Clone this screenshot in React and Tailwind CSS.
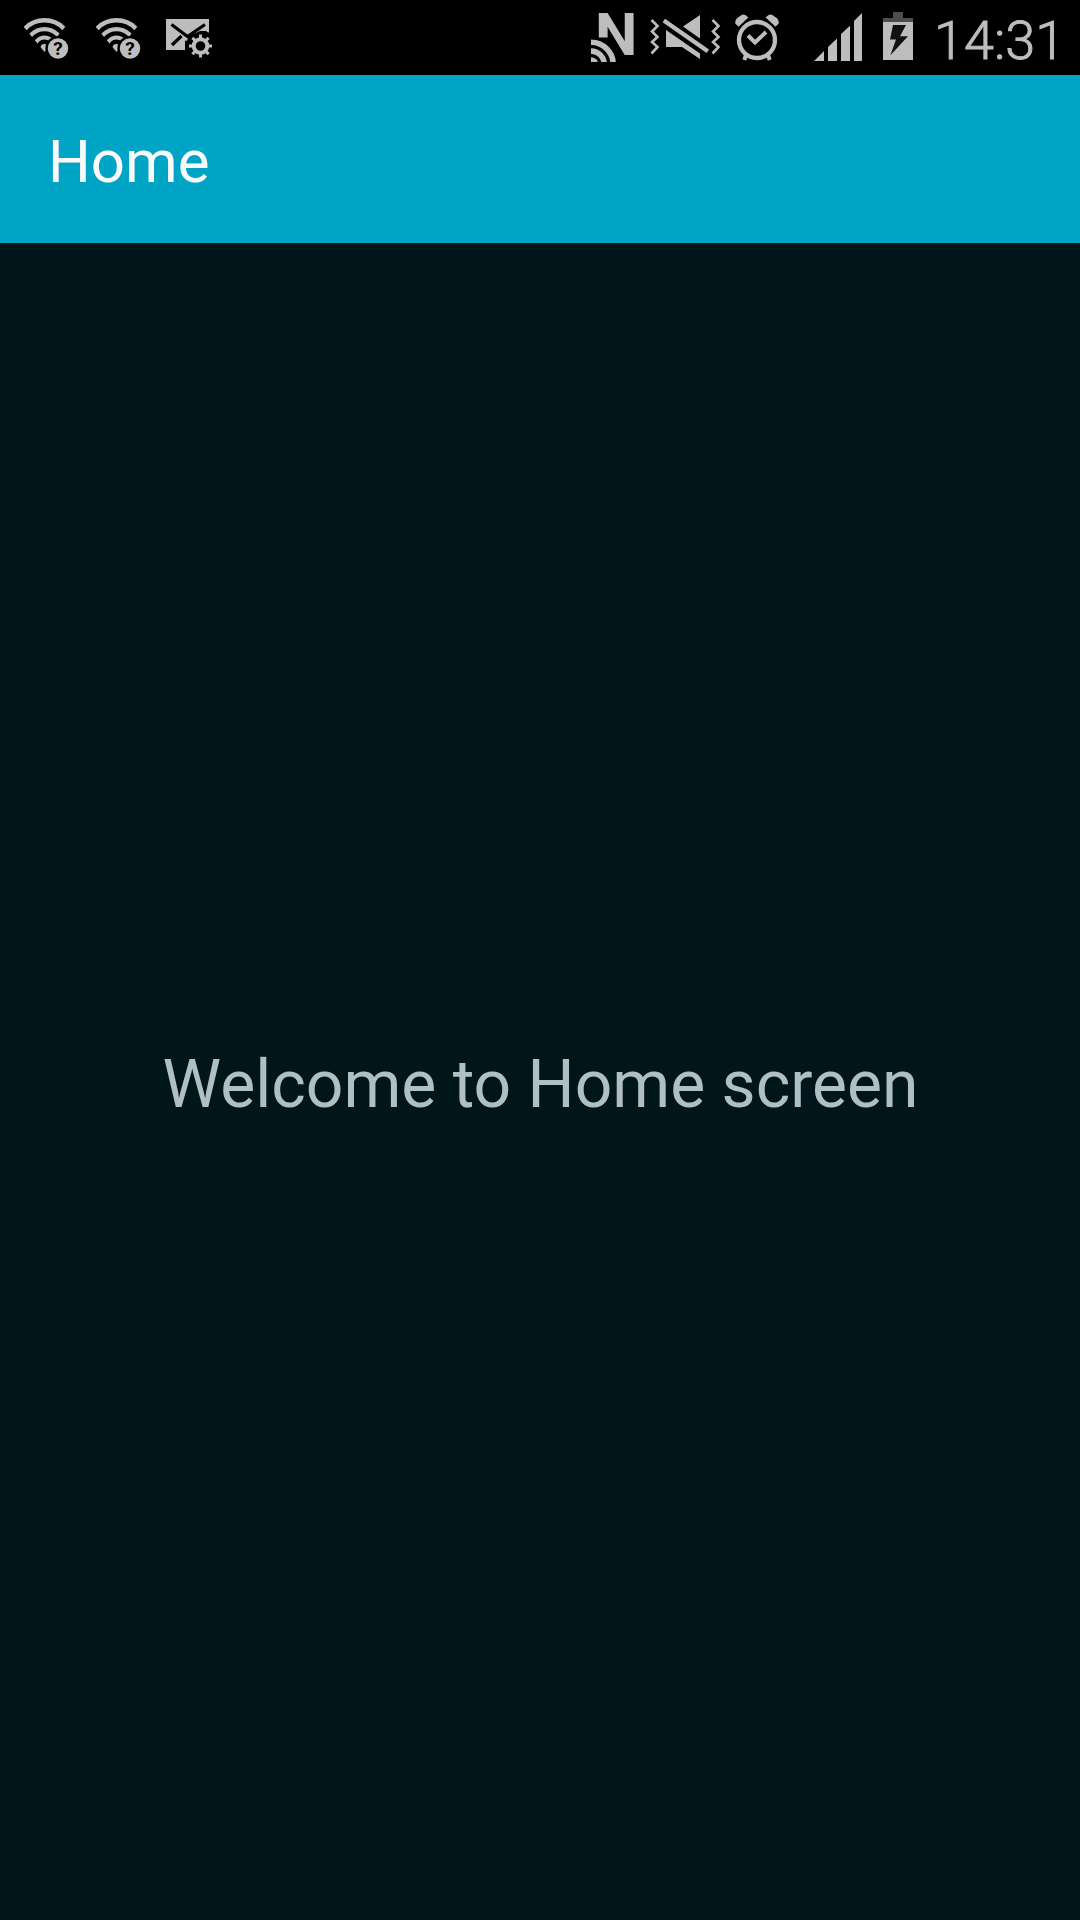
function WifiUnknown({ className, id }) {
  return (
    <svg className={className} width="48" height="48" viewBox="22 16 48 48">
      <clipPath id={id}>
        <path d="M44.5 52 L18.5 20.5 V10 H70.5 V20.5 Z" />
      </clipPath>
      <g clipPath={`url(#${id})`} fill="none" stroke="#bdbdbd">
        <circle cx="44.5" cy="47.5" r="27.2" strokeWidth="4.6" />
        <circle cx="44.5" cy="47.5" r="18.4" strokeWidth="4.2" />
        <circle cx="44.5" cy="47.5" r="10" strokeWidth="4" />
        <circle cx="44.5" cy="48" r="4" fill="#bdbdbd" stroke="none" />
      </g>
      <circle cx="58" cy="48.5" r="12.6" fill="#000" />
      <circle cx="58" cy="48.5" r="10.2" fill="#bdbdbd" />
      <text x="58" y="55" textAnchor="middle" fontFamily="Roboto, sans-serif" fontWeight="700" fontSize="19" fill="#000">?</text>
    </svg>
  );
}

const TEETH = [0, 45, 90, 135, 180, 225, 270, 315];

function MailSettings({ className }) {
  return (
    <svg className={className} width="48" height="48" viewBox="165 16 48 48">
      <rect x="166" y="19" width="43" height="31" fill="#bdbdbd" />
      <path d="M171.5 24.5 L187.5 36.5 L205 24.5 M172 45 L181.5 36" fill="none" stroke="#000" strokeWidth="3.2" />
      <path d="M185 51 V40.8 L187 40.8 L189 36 L200 31 H206 L208 32.5 L212 32 V51 Z" fill="#000" />
      <circle cx="200.5" cy="46" r="11" fill="#000" />
      <circle cx="200.5" cy="46" r="6.8" fill="none" stroke="#bdbdbd" strokeWidth="4" />
      {TEETH.map((a) => (
        <rect key={a} x="199" y="34.5" width="3" height="4.5" fill="#bdbdbd" transform={`rotate(${a} 200.5 46)`} />
      ))}
    </svg>
  );
}

function Nfc({ className }) {
  return (
    <svg className={className} width="48" height="75" viewBox="591 0 48 75">
      <text x="595" y="55" fontFamily="Roboto, sans-serif" fontWeight="700" fontSize="60" fill="#bdbdbd">N</text>
      <rect x="591" y="37.5" width="17" height="26" fill="#000" />
      <clipPath id="nfc-waves">
        <rect x="591" y="36" width="30" height="26" />
      </clipPath>
      <g clipPath="url(#nfc-waves)" fill="none" stroke="#bdbdbd" strokeWidth="5.6">
        <circle cx="591" cy="64.5" r="22.2" />
        <circle cx="591" cy="64.5" r="13.4" />
        <circle cx="591" cy="64.5" r="7.3" fill="#bdbdbd" stroke="none" />
      </g>
    </svg>
  );
}

function VibrateMute({ className }) {
  return (
    <svg className={className} width="72" height="52" viewBox="649 12 72 52">
      <g fill="none" stroke="#bdbdbd" strokeWidth="2.6">
        <path d="M651.5 20 L657.5 26 L652 31.5 L657.5 37 L652 42 L657.5 47 L651.5 53.5" />
        <path d="M712.5 20 L718.5 26 L713 31.5 L718.5 37 L713 42 L718.5 47 L712.5 53.5" />
        <path d="M663.8 20.5 L707.8 51.3" strokeWidth="4.3" />
      </g>
      <path d="M683 26.5 L700 15 V38.4 Z M666 30 L700 53.5 V59 L682 47 H666 Z" fill="#bdbdbd" />
    </svg>
  );
}

function Alarm({ className }) {
  return (
    <svg className={className} width="46" height="50" viewBox="734 12 46 50">
      <g fill="none" stroke="#bdbdbd">
        <circle cx="757" cy="40" r="18" strokeWidth="4.3" />
        <path d="M748 35.5 L755 42.5 L766 32" strokeWidth="4" />
        <path d="M745.8 55.5 L744.3 60 M768.2 55.5 L769.7 60" strokeWidth="4" />
      </g>
      <path d="M738.5 26.8 L735.3 23.5 Q734.8 20.5 737 18.3 L742 14.8 Q745 13.6 748.3 17.5 Z M775.5 26.8 L778.7 23.5 Q779.2 20.5 777 18.3 L772 14.8 Q769 13.6 765.7 17.5 Z" fill="#bdbdbd" />
    </svg>
  );
}

function Signal({ className }) {
  return (
    <svg className={className} width="48" height="49" viewBox="814 12 48 49">
      <path d="M814 61 L824 51 V61 Z M828 61 V47 L837 38.5 V61 Z M841 61 V34 L850 25.7 V61 Z M854 61 V21 L862 13 V61 Z" fill="#bdbdbd" />
    </svg>
  );
}

function Battery({ className }) {
  return (
    <svg className={className} width="30" height="48" viewBox="883 12 30 48">
      <path d="M893 12 H903 V18 H913 V22 H883 V18 H893 Z" fill="#4d4d4d" />
      <rect x="883" y="22" width="30" height="38" fill="#bdbdbd" />
      <path d="M893 25 H906 L900 36.3 H908 L890.4 55.3 L896 39.4 H890 Z" fill="#111" />
    </svg>
  );
}

function StatusBar() {
  return (
    <div className="flex h-[75px] shrink-0 items-start bg-black">
      <WifiUnknown id="wifi-a" className="ml-[22px] mt-4 shrink-0" />
      <WifiUnknown id="wifi-b" className="ml-6 mt-4 shrink-0" />
      <MailSettings className="ml-[23px] mt-4 shrink-0" />
      <Nfc className="ml-[378px] shrink-0" />
      <VibrateMute className="ml-[10px] mt-3 shrink-0" />
      <Alarm className="ml-[13px] mt-3 shrink-0" />
      <Signal className="ml-[34px] mt-3 shrink-0" />
      <Battery className="ml-[21px] mt-3 shrink-0" />
      <span className="ml-[21px] mt-[9px] text-[54px] leading-[64px] font-light text-[#bdbdbd] [-webkit-text-stroke:0.9px_#bdbdbd]">
        14:31
      </span>
    </div>
  );
}

export default function App() {
  return (
    <div className="flex h-[1920px] w-[1080px] flex-col overflow-hidden bg-[#00161b] font-['Roboto',sans-serif]">
      <StatusBar />
      <header className="flex h-[168px] shrink-0 items-center bg-[#00a5c5] px-12">
        <h1 className="pt-[5px] text-[60px] leading-[70px] text-[#fafafa]">Home</h1>
      </header>
      <main className="flex grow items-center justify-center">
        <p className="pt-[7px] pl-px text-[66px] leading-[78px] text-[#b0bec5]">Welcome to Home screen</p>
      </main>
    </div>
  );
}
